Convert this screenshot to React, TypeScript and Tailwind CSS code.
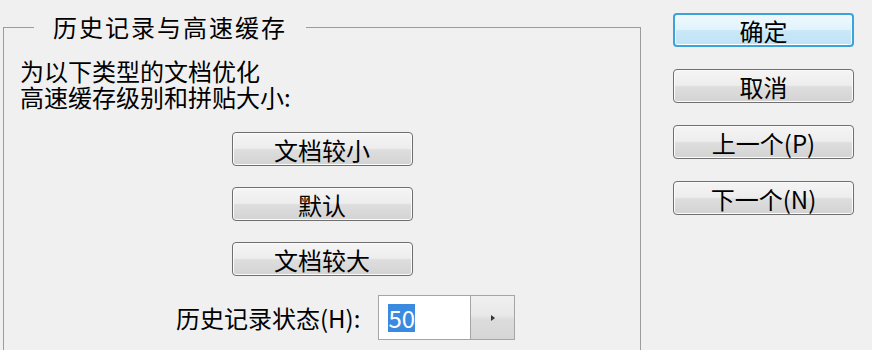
import React from "react";

const font = { fontFamily: '"Noto Sans CJK SC", "Noto Sans", sans-serif' };

function Btn({ children, primary = false }: { children: React.ReactNode; primary?: boolean }) {
  return (
    <button
      className={
        primary
          ? "h-[34px] w-[181px] rounded-[4px] border-2 border-[#38a3dc] bg-[linear-gradient(to_bottom,#eef8fd_0%,#e2f3fc_48%,#c9e8f8_52%,#bfe3f6_100%)] pt-[1px] text-[24px] leading-none text-black shadow-[inset_0_0_0_1px_#ffffff]"
          : "h-[34px] w-[181px] rounded-[4px] border border-[#6f6f6f] bg-[linear-gradient(to_bottom,#f5f5f5_0%,#ededed_48%,#dedede_52%,#d3d3d3_100%)] pt-[1px] text-[24px] leading-none text-black shadow-[inset_0_0_0_1px_#fbfbfb]"
      }
      style={font}
    >
      {children}
    </button>
  );
}

export default function App() {
  return (
    <div className="flex h-[350px] w-[872px] overflow-hidden bg-[#f0f0f0] text-black" style={font}>
      <fieldset className="ml-[3px] mt-[13px] h-[360px] w-[638px] shrink-0 border border-[#9c9c9c] p-0">
        <legend className="ml-[30px] px-[19px] text-[24px] leading-[28px] tracking-[2px]">历史记录与高速缓存</legend>
        <div className="mt-[17px] pl-[16px] text-[24px] leading-[26px]">
          <div>为以下类型的文档优化</div>
          <div>高速缓存级别和拼贴大小:</div>
        </div>
        <div className="mt-[22px] flex flex-col items-center gap-[21px]">
          <Btn>文档较小</Btn>
          <Btn>默认</Btn>
          <Btn>文档较大</Btn>
        </div>
        <div className="mt-[19px] flex items-center pl-[172px]">
          <span className="text-[24px] leading-none">历史记录状态(H):</span>
          <div className="ml-[18px] flex h-[45px] w-[137px] border border-[#a5a5a5] bg-white">
            <div className="flex flex-1 items-center pl-[9px]">
              <span className="bg-[#3a8be0] text-[24px] leading-[28px] text-white">50</span>
            </div>
            <div className="flex w-[44px] items-center justify-center border-l border-[#a5a5a5] bg-[linear-gradient(to_bottom,#f0f0f0_0%,#e8e8e8_45%,#dcdcdc_55%,#d6d6d6_100%)]">
              <svg width="6" height="8" viewBox="0 0 6 8">
                <polygon points="1,1 5,4 1,7" fill="#333" />
              </svg>
            </div>
          </div>
        </div>
      </fieldset>
      <div className="ml-[32px] mt-[13px] flex flex-col gap-[22px]">
        <Btn primary>确定</Btn>
        <Btn>取消</Btn>
        <Btn>上一个(P)</Btn>
        <Btn>下一个(N)</Btn>
      </div>
    </div>
  );
}
